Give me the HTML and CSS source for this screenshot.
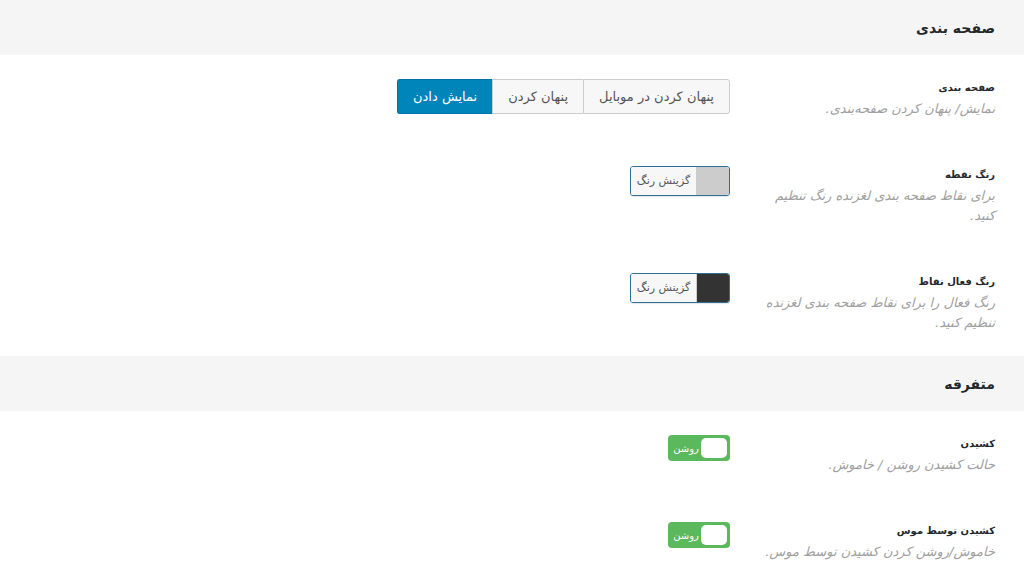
FILE: index.html
```html
<!DOCTYPE html>
<html lang="fa" dir="rtl">
<head>
    <meta charset="UTF-8">
    <meta name="viewport" content="width=device-width, initial-scale=1.0">
    <title>تنظیمات اسلایدر</title>
    <link rel="stylesheet" href="styles.css">
</head>
<body>
    <div class="section-title">صفحه بندی</div>

    <div class="row">
        <div class="row-label">
            <div class="label">صفحه بندی</div>
            <div class="desc">نمایش/ پنهان کردن صفحه‌بندی.</div>
        </div>
        <div class="row-control">
            <div class="btn-group">
                <button class="seg">پنهان کردن در موبایل</button>
                <button class="seg">پنهان کردن</button>
                <button class="seg active">نمایش دادن</button>
            </div>
        </div>
    </div>

    <div class="row">
        <div class="row-label">
            <div class="label">رنگ نقطه</div>
            <div class="desc">برای نقاط صفحه بندی لغزنده رنگ تنظیم کنید.</div>
        </div>
        <div class="row-control">
            <div class="color-picker">
                <span class="swatch light"></span>
                <span class="picker-text">گزینش رنگ</span>
            </div>
        </div>
    </div>

    <div class="row">
        <div class="row-label">
            <div class="label">رنگ فعال نقاط</div>
            <div class="desc">رنگ فعال را برای نقاط صفحه بندی لغزنده تنظیم کنید.</div>
        </div>
        <div class="row-control">
            <div class="color-picker">
                <span class="swatch dark"></span>
                <span class="picker-text">گزینش رنگ</span>
            </div>
        </div>
    </div>

    <div class="section-title">متفرقه</div>

    <div class="row">
        <div class="row-label">
            <div class="label">کشیدن</div>
            <div class="desc">حالت کشیدن روشن / خاموش.</div>
        </div>
        <div class="row-control">
            <div class="toggle">
                <span class="knob"></span>
                <span class="toggle-text">روشن</span>
            </div>
        </div>
    </div>

    <div class="row">
        <div class="row-label">
            <div class="label">کشیدن توسط موس</div>
            <div class="desc">خاموش/روشن کردن کشیدن توسط موس.</div>
        </div>
        <div class="row-control">
            <div class="toggle">
                <span class="knob"></span>
                <span class="toggle-text">روشن</span>
            </div>
        </div>
    </div>
</body>
</html>
```

FILE: styles.css
```css
body {
    margin: 0;
    padding: 0;
    background-color: #fff;
    color: #23282d;
    font-family: "DejaVu Sans", "Noto Sans", sans-serif;
    direction: rtl;
}

.section-title {
    background-color: #f5f5f5;
    height: 55px;
    line-height: 56px;
    padding-right: 29px;
    font-size: 14px;
    font-weight: bold;
}

.row {
    display: flex;
    padding: 24px 29px 23px 0;
}

.row-label {
    width: 242px;
    margin-left: 23px;
}

.label {
    font-size: 10px;
    font-weight: bold;
    line-height: 14px;
    margin-top: 2px;
}

.desc {
    font-size: 13px;
    font-style: italic;
    color: #a0a0a0;
    line-height: 20px;
    margin-top: 4px;
}

.btn-group {
    display: flex;
}

.seg {
    font-family: inherit;
    font-size: 13px;
    color: #555;
    background-color: #f7f7f7;
    border: 1px solid #ccc;
    border-right: none;
    height: 35px;
    padding: 0 15px;
    margin: 0;
    cursor: pointer;
}

.seg:first-child {
    border-right: 1px solid #ccc;
    border-radius: 0 3px 3px 0;
}

.seg:last-child {
    border-radius: 3px 0 0 3px;
}

.seg.active {
    background-color: #0085ba;
    border-color: #0073aa;
    color: #fff;
}

.color-picker {
    display: flex;
    width: 98px;
    height: 28px;
    border: 1px solid #2f6f95;
    border-radius: 3px;
    overflow: hidden;
    box-shadow: 0 1px 1px rgba(0,0,0,0.1);
}

.swatch {
    width: 32px;
}

.swatch.light {
    background-color: #cccccc;
}

.swatch.dark {
    background-color: #333333;
}

.picker-text {
    flex: 1;
    background-color: #f7f7f7;
    border-right: 1px solid #ccc;
    font-size: 11px;
    color: #555;
    line-height: 28px;
    text-align: center;
}

.toggle {
    display: flex;
    align-items: center;
    width: 62px;
    height: 26px;
    background-color: #5cb85c;
    border-radius: 4px;
    box-sizing: border-box;
    padding: 3px;
}

.knob {
    width: 26px;
    height: 20px;
    background-color: #fff;
    border-radius: 5px;
}

.toggle-text {
    flex: 1;
    color: #fff;
    font-size: 10px;
    text-align: center;
}
```
